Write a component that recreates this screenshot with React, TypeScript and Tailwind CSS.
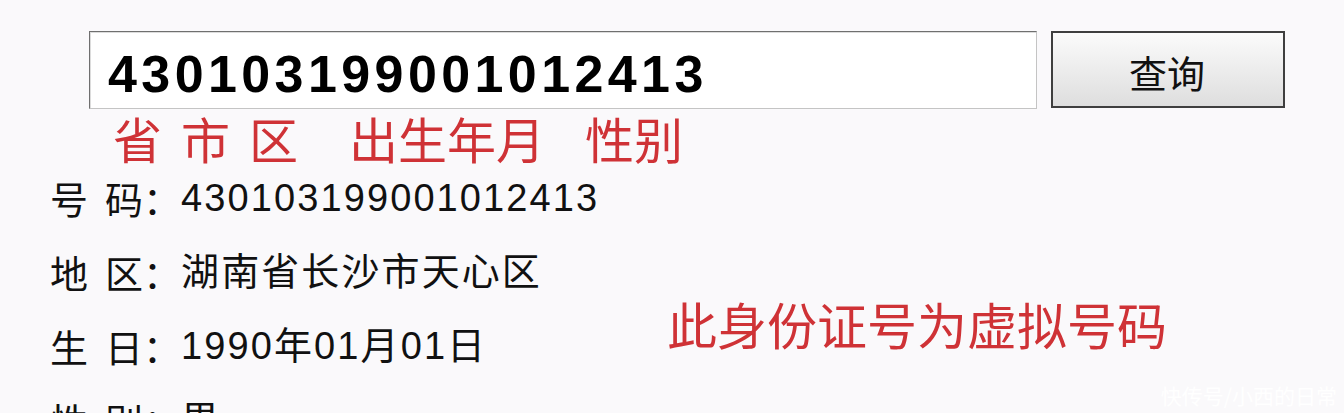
export default function App() {
  const cjk = "font-['Noto_Sans_CJK_SC','Noto_Sans',sans-serif]"
  const rows = [
    { a: '号', b: '码', value: '430103199001012413' },
    { a: '地', b: '区', value: '湖南省长沙市天心区' },
    { a: '生', b: '日', value: '1990年01月01日' },
    { a: '性', b: '别', value: '男' },
  ]

  return (
    <div className={`relative w-[1344px] h-[413px] overflow-hidden bg-[#faf9fb] ${cjk}`}>
      {/* search bar */}
      <div className="flex items-start pt-[31px] pl-[89px]">
        <div className="w-[948px] h-[78px] bg-white border border-t-[#6f6f6f] border-l-[#6f6f6f] border-b-[#c4c4c4] border-r-[#c4c4c4] shadow-[inset_1px_1px_0_#dcdcdc] flex items-center pl-[18px]">
          <span className="font-['Liberation_Sans',sans-serif] font-bold text-[52px] leading-none tracking-[4.4px] text-black pt-[8px]">
            430103199001012413
          </span>
        </div>
        <button className="ml-[14px] w-[234px] h-[77px] border-2 border-[#3f3f3f] bg-gradient-to-b from-[#fbfbfb] to-[#dedede] flex items-center justify-center">
          <span className={`${cjk} text-[38px] leading-none text-[#111] pt-[5px] pr-[2px]`}>查询</span>
        </button>
      </div>

      {/* red hints */}
      <div className="flex items-center mt-[4px] h-[48px] pl-[113px] text-[49px] leading-none text-[#cf3236]">
        <span>省</span>
        <span className="ml-[19px]">市</span>
        <span className="ml-[19px]">区</span>
        <span className="ml-[51px]">出生年月</span>
        <span className="ml-[40px]">性别</span>
      </div>

      <div className="flex">
        <div className="w-[667px] pl-[50px]">
          {rows.map((r) => (
            <div key={r.a} className="flex items-center h-[74px] text-[38px] leading-none text-[#111]">
              <span>{r.a}</span>
              <span className="ml-[17px]">{r.b}</span>
              <span>：</span>
              <span className="font-['Liberation_Sans','Noto_Sans_CJK_SC',sans-serif] tracking-[2.1px]">
                {r.value}
              </span>
            </div>
          ))}
        </div>
        <div className="pt-[137px] text-[50px] leading-none text-[#cf3236]">此身份证号为虚拟号码</div>
      </div>

      <div className="absolute right-[7px] bottom-[7px] text-[21px] leading-none text-white">快传号/小西的日常</div>
    </div>
  )
}
